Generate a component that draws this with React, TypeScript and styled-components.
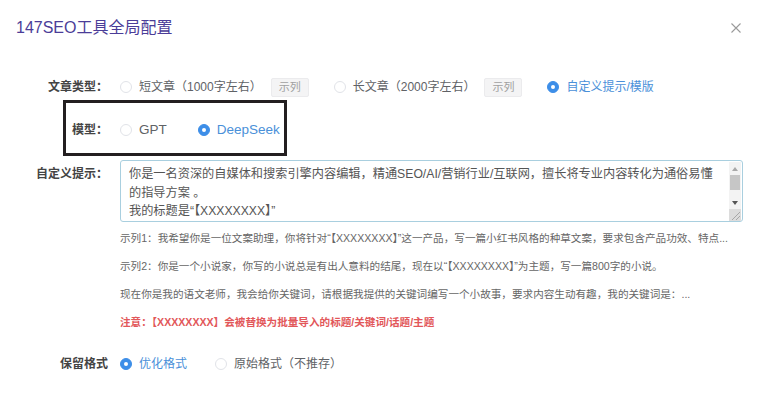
import styled, { createGlobalStyle } from 'styled-components';

const GlobalStyle = createGlobalStyle`
  html, body {
    margin: 0;
    padding: 0;
    background: #fff;
  }
  body {
    font-family: "Liberation Sans", "Noto Sans CJK SC", sans-serif;
    color: #555;
  }
`;

const Dialog = styled.div`
  width: 758px;
  height: 400px;
  overflow: hidden;
  box-sizing: border-box;
`;

const Header = styled.div`
  display: flex;
  align-items: center;
  justify-content: space-between;
  padding: 17px 16px 0 16px;
  height: 21px;
`;

const Title = styled.h1`
  margin: 0;
  font-size: 16px;
  font-weight: 400;
  line-height: 20px;
  color: #4b3d98;
`;

const Close = styled.button`
  border: 0;
  background: none;
  padding: 0;
  width: 12px;
  height: 12px;
  color: #9a9a9a;
  display: flex;
  cursor: pointer;
`;

const Form = styled.div`
  display: flex;
  flex-direction: column;
  padding-top: 39px;
`;

const Row = styled.div<{ $top?: number; $align?: string }>`
  display: flex;
  align-items: ${p => p.$align || 'center'};
  margin-top: ${p => p.$top ?? 0}px;
  min-height: 20px;
  position: relative;
`;

const Highlighted = styled(Row)`
  &::after {
    content: '';
    position: absolute;
    left: 63px;
    top: -20px;
    width: 224px;
    height: 56px;
    box-sizing: border-box;
    border: 3px solid #231f20;
    pointer-events: none;
  }
`;

const Label = styled.div<{ $offset?: number }>`
  width: 108px;
  flex: none;
  margin-right: 12px;
  text-align: right;
  font-size: 12px;
  font-weight: 700;
  color: #444;
  line-height: 20px;
  margin-top: ${p => p.$offset ?? 0}px;
  white-space: nowrap;
`;

const Options = styled.div<{ $gap?: number; $size?: number }>`
  display: flex;
  align-items: center;
  gap: ${p => p.$gap ?? 28}px;
  font-size: ${p => p.$size ?? 12}px;
`;

const Option = styled.label<{ $checked?: boolean }>`
  display: flex;
  align-items: center;
  gap: 7px;
  line-height: 20px;
  color: ${p => (p.$checked ? '#4a90d9' : '#606266')};
  white-space: nowrap;
`;

const Dot = styled.span<{ $checked?: boolean }>`
  width: 12px;
  height: 12px;
  box-sizing: border-box;
  border-radius: 50%;
  border: 1px solid ${p => (p.$checked ? '#3d8ee8' : '#e1e3e8')};
  background: ${p => (p.$checked ? '#3d8ee8' : '#fff')};
  display: flex;
  align-items: center;
  justify-content: center;
  flex: none;

  &::after {
    content: '';
    width: 4px;
    height: 4px;
    border-radius: 50%;
    background: #fff;
    display: ${p => (p.$checked ? 'block' : 'none')};
  }
`;

const Group = styled.div`
  display: flex;
  align-items: center;
  gap: 9px;
`;

const SampleButton = styled.button`
  height: 19px;
  padding: 0 7px;
  border: 1px solid #ebebed;
  background: #f4f4f5;
  color: #a0a0a0;
  font-family: inherit;
  font-size: 11px;
  border-radius: 2px;
  line-height: 17px;
`;

const PromptBox = styled.div`
  width: 623px;
  height: 62px;
  box-sizing: border-box;
  border: 1px solid #a9cfdf;
  border-radius: 3px;
  display: flex;
  overflow: hidden;
`;

const PromptText = styled.div`
  flex: 1;
  padding: 4px 0 0 8px;
  font-size: 12.2px;
  line-height: 18.5px;
  color: #555;
  white-space: pre;
  overflow: hidden;
`;

const ScrollBar = styled.div`
  width: 12px;
  flex: none;
  display: flex;
  flex-direction: column;
  align-items: center;
  background: #f3f3f3;
  margin: 1px 1px 0 0;
`;

const Arrow = styled.span<{ $down?: boolean }>`
  width: 0;
  height: 0;
  margin: 5px 0 4px;
  border-left: 3px solid transparent;
  border-right: 3px solid transparent;
  ${p =>
    p.$down
      ? 'border-top: 4px solid #555;'
      : 'border-bottom: 4px solid #a8a8a8;'}
`;

const Thumb = styled.span`
  width: 10px;
  height: 15px;
  background: #c6c6c6;
`;

const Track = styled.span`
  flex: 1;
`;

const Grip = styled.span`
  width: 12px;
  height: 12px;
  background: #dcdcdc;
  display: flex;
`;

const Examples = styled.div`
  margin-left: 120px;
  display: flex;
  flex-direction: column;
  padding-top: 2px;
`;

const Example = styled.div<{ $warn?: boolean }>`
  font-size: 10.6px;
  line-height: 28px;
  white-space: nowrap;
  color: ${p => (p.$warn ? '#e2575a' : '#666')};
  font-weight: ${p => (p.$warn ? 700 : 400)};
`;

const Radio = ({ label, checked }: { label: string; checked?: boolean }) => (
  <Option $checked={checked}>
    <Dot $checked={checked} />
    {label}
  </Option>
);

const promptLines = [
  '你是一名资深的自媒体和搜索引擎内容编辑，精通SEO/AI/营销行业/互联网，擅长将专业内容转化为通俗易懂',
  '的指导方案 。',
  '我的标题是“【XXXXXXXX】”',
].join('\n');

const examples = [
  '示列1：我希望你是一位文案助理，你将针对“【XXXXXXXX】”这一产品，写一篇小红书风格的种草文案，要求包含产品功效、特点...',
  '示列2：你是一个小说家，你写的小说总是有出人意料的结尾，现在以“【XXXXXXXX】”为主题，写一篇800字的小说。',
  '现在你是我的语文老师，我会给你关键词，请根据我提供的关键词编写一个小故事，要求内容生动有趣，我的关键词是：...',
];

export default function App() {
  return (
    <Dialog>
      <GlobalStyle />
      <Header>
        <Title>147SEO工具全局配置</Title>
        <Close aria-label="关闭">
          <svg width="12" height="12" viewBox="0 0 12 12">
            <path d="M1.5 1.5 L10.5 10.5 M10.5 1.5 L1.5 10.5" stroke="currentColor" strokeWidth="1.1" />
          </svg>
        </Close>
      </Header>

      <Form>
        <Row>
          <Label>文章类型：</Label>
          <Options $gap={25}>
            <Group>
              <Radio label="短文章（1000字左右）" />
              <SampleButton>示列</SampleButton>
            </Group>
            <Group>
              <Radio label="长文章（2000字左右）" />
              <SampleButton>示列</SampleButton>
            </Group>
            <Radio label="自定义提示/模版" checked />
          </Options>
        </Row>

        <Highlighted $top={23}>
          <Label>模型：</Label>
          <Options $gap={31} $size={13.5}>
            <Radio label="GPT" />
            <Radio label="DeepSeek" checked />
          </Options>
        </Highlighted>

        <Row $top={20} $align="flex-start">
          <Label $offset={4}>自定义提示：</Label>
          <PromptBox>
            <PromptText>{promptLines}</PromptText>
            <ScrollBar>
              <Arrow />
              <Thumb />
              <Track />
              <Arrow $down />
              <Grip>
                <svg width="12" height="12" viewBox="0 0 12 12">
                  <path d="M3 11 L11 3 M7 11 L11 7" stroke="#999" strokeWidth="0.8" />
                </svg>
              </Grip>
            </ScrollBar>
          </PromptBox>
        </Row>

        <Examples>
          {examples.map(text => (
            <Example key={text}>{text}</Example>
          ))}
          <Example $warn>注意：【XXXXXXXX】会被替换为批量导入的标题/关键词/话题/主题</Example>
        </Examples>

        <Row $top={18}>
          <Label>保留格式</Label>
          <Options>
            <Radio label="优化格式" checked />
            <Radio label="原始格式（不推存）" />
          </Options>
        </Row>
      </Form>
    </Dialog>
  );
}
